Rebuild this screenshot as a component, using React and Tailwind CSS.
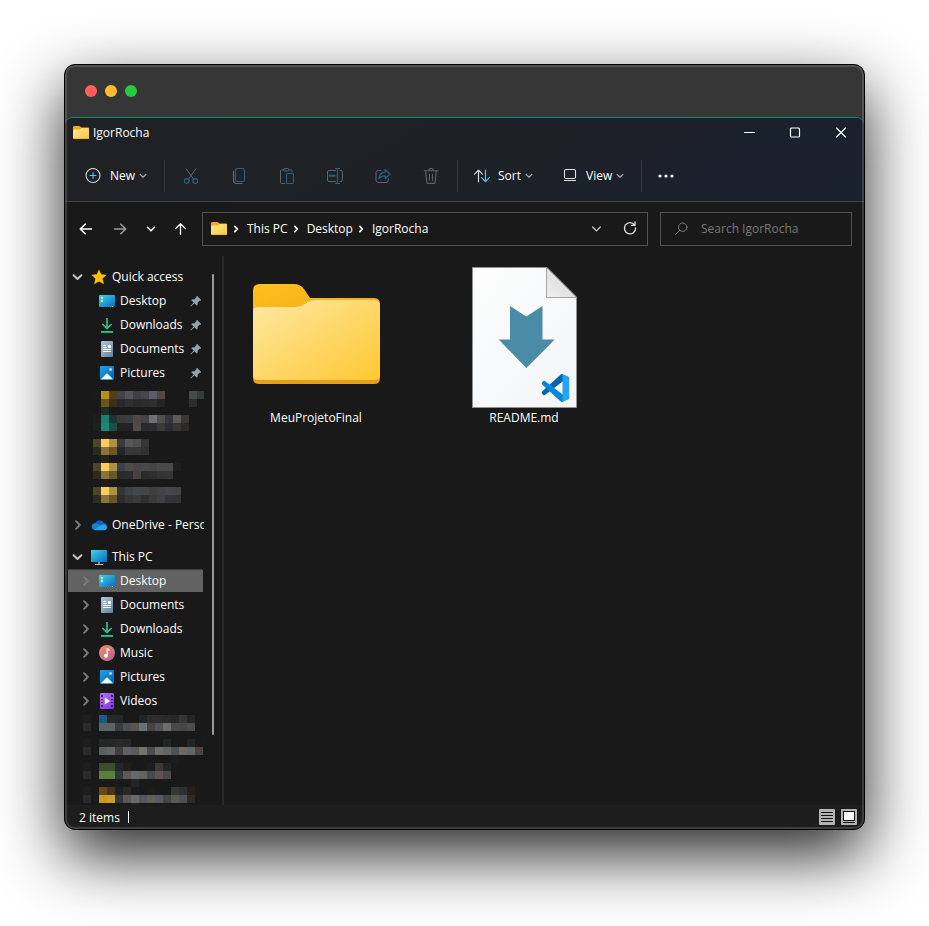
import React from 'react';

function GradientDefs() {
  return (
    <svg className="absolute size-0" aria-hidden="true">
      <defs>
        <linearGradient id="g-folder" x1="0" y1="0" x2="1" y2="1">
          <stop offset="0" stopColor="#ffe8a3" />
          <stop offset="1" stopColor="#ffc832" />
        </linearGradient>
        <linearGradient id="g-tab" x1="0" y1="0" x2="1" y2="1">
          <stop offset="0" stopColor="#fec11b" />
          <stop offset="1" stopColor="#f0a21c" />
        </linearGradient>
        <linearGradient id="g-screen" x1="0" y1="0" x2="1" y2="1">
          <stop offset="0" stopColor="#35dbe6" />
          <stop offset="1" stopColor="#0b68c4" />
        </linearGradient>
        <linearGradient id="g-doc" x1="0" y1="0" x2="1" y2="1">
          <stop offset="0" stopColor="#b5c7da" />
          <stop offset="1" stopColor="#64809f" />
        </linearGradient>
        <linearGradient id="g-pic" x1="0" y1="0" x2="1" y2="1">
          <stop offset="0" stopColor="#1ea2e6" />
          <stop offset="1" stopColor="#0660c0" />
        </linearGradient>
        <linearGradient id="g-music" x1="0" y1="0" x2="1" y2="1">
          <stop offset="0" stopColor="#f2975f" />
          <stop offset="1" stopColor="#b55c98" />
        </linearGradient>
        <linearGradient id="g-video" x1="0" y1="0" x2="1" y2="1">
          <stop offset="0" stopColor="#b878f2" />
          <stop offset="1" stopColor="#7b2fe0" />
        </linearGradient>
        <linearGradient id="g-down" x1="0" y1="0" x2="0" y2="1">
          <stop offset="0" stopColor="#2fce8f" />
          <stop offset="1" stopColor="#17a592" />
        </linearGradient>
        <linearGradient id="g-page" x1="0" y1="0" x2="1" y2="1">
          <stop offset="0" stopColor="#fdfdfd" />
          <stop offset="1" stopColor="#f3f5f8" />
        </linearGradient>
        <linearGradient id="g-fold" x1="0" y1="1" x2="1" y2="0">
          <stop offset="0" stopColor="#f1f1f1" />
          <stop offset="1" stopColor="#cfcfcf" />
        </linearGradient>
      </defs>
    </svg>
  );
}

/* ---------- line icons ---------- */

function Line({ size = 16, children, className = '' }) {
  return (
    <svg
      width={size}
      height={size}
      viewBox={`0 0 ${size} ${size}`}
      fill="none"
      stroke="currentColor"
      strokeLinecap="round"
      strokeLinejoin="round"
      className={`shrink-0 ${className}`}
      aria-hidden="true"
    >
      {children}
    </svg>
  );
}

const ChevronDown = ({ className }) => (
  <Line size={8} className={className}>
    <path d="M1.200 2.500 4 5.200l2.800-2.700" strokeWidth="1.200" />
  </Line>
);

const CrumbChevron = () => (
  <Line size={8}>
    <path d="M2.800 1.400 5.400 4 2.800 6.600" strokeWidth="1.700" />
  </Line>
);

const TreeChevron = ({ open }) => (
  <Line className={open ? 'text-[#c8c8c8]' : 'text-[#7c7c7c]'}>
    {open ? (
      <path d="M3.600 6.200 7.500 10l3.900-3.800" strokeWidth="1.900" />
    ) : (
      <path d="M6 4.200 9.800 8 6 11.800" strokeWidth="1.900" />
    )}
  </Line>
);

const BLUE = '#28607f';

const PlusCircle = () => (
  <Line className="text-[#d6d6d6]">
    <circle cx="8" cy="7.500" r="7" strokeWidth="1.100" />
    <path d="M8 4.500v6M5 7.500h6" stroke="#4cc2ff" strokeWidth="1.100" />
  </Line>
);

const Cut = () => (
  <Line>
    <path d="M3.200.800 10.600 11.200M12.800.800 5.400 11.200" />
    <circle cx="3.800" cy="13" r="2.400" stroke={BLUE} strokeWidth="1.200" />
    <circle cx="12.200" cy="13" r="2.400" stroke={BLUE} strokeWidth="1.200" />
  </Line>
);

const Copy = () => (
  <Line>
    <path d="M2.500 3v9.500a3 3 0 0 0 3 3h5.500" strokeWidth="1.200" />
    <rect x="4.500" y=".5" width="9" height="13" rx="1.800" stroke={BLUE} strokeWidth="1.200" />
  </Line>
);

const Paste = () => (
  <Line>
    <path d="M4.400 1.900H2.500a1 1 0 0 0-1 1v11.600a1 1 0 0 0 1 1h3.100M9.800 1.900H12a1 1 0 0 1 1 1v1.300" />
    <rect x="4.500" y=".6" width="5.300" height="2.400" rx="1.100" />
    <rect x="7.500" y="5.500" width="7" height="10" rx="1.100" stroke={BLUE} strokeWidth="1.200" />
  </Line>
);

const Rename = () => (
  <Line>
    <path d="M8.500 2.500H2a1.500 1.500 0 0 0-1.500 1.500v8a1.500 1.500 0 0 0 1.500 1.500h6.500M13 2.500h.8a1.700 1.700 0 0 1 1.700 1.700v7.600a1.700 1.700 0 0 1-1.700 1.700H13" />
    <path d="M10.500 1v14M8.500.500h4M8.500 15.500h4" stroke={BLUE} strokeWidth="1.200" />
    <path d="M2.800 7.800h5" stroke={BLUE} strokeWidth="2" />
  </Line>
);

const Share = () => (
  <Line>
    <path d="M6 2.500H3.300A2.300 2.300 0 0 0 1 4.800v7.400a2.300 2.300 0 0 0 2.300 2.300h7.600a2.300 2.300 0 0 0 2.300-2.300v-1.500" />
    <path d="M10.200 1.500 15 6l-4.800 4.400V7.900C7.200 7.900 5.400 8.800 4 10.600c.3-3.600 2.600-6.300 6.200-6.600Z" stroke={BLUE} strokeWidth="1.300" />
  </Line>
);

const Trash = () => (
  <Line>
    <path d="M1.200 2.800h13.600M5.800 2.600a2.200 2.200 0 0 1 4.400 0M2.700 3l1.100 11.300A1.200 1.200 0 0 0 5 15.400h6a1.200 1.200 0 0 0 1.200-1.100L13.300 3M6.500 6.400v5.800M9.500 6.400v5.800" strokeWidth="1.100" />
  </Line>
);

const SortIcon = () => (
  <Line>
    <path d="M4.500 13.800V2.300M.600 6.200l3.900-4 3.900 4" stroke="#d6d6d6" strokeWidth="1.200" />
    <path d="M11.500 2.200v11.500M7.600 9.700l3.900 4 3.900-4" stroke="#4cc2ff" strokeWidth="1.200" />
  </Line>
);

const ViewIcon = () => (
  <Line className="text-[#dedede]">
    <rect x="1.500" y="1.500" width="11" height="9" rx="1.500" strokeWidth="1.100" />
    <path d="M1.500 12.500h11" strokeWidth="1.100" />
  </Line>
);

const ArrowLeft = () => (
  <Line>
    <path d="M13.500 8H2.400M7.200 3.200 2.300 8l4.900 4.800" strokeWidth="1.600" />
  </Line>
);
const ArrowRight = () => (
  <Line>
    <path d="M2.500 8h11.100M8.800 3.200 13.700 8l-4.900 4.800" strokeWidth="1.600" />
  </Line>
);
const ArrowUp = () => (
  <Line>
    <path d="M8.500 13.500V2.900M3.700 7.500l4.800-4.800 4.800 4.800" strokeWidth="1.300" />
  </Line>
);
const Down = () => (
  <Line size={10}>
    <path d="M1.500 3.300 5 6.700l3.500-3.400" strokeWidth="1.600" />
  </Line>
);
const Refresh = () => (
  <Line>
    <path d="M12.600 4A5.600 5.600 0 1 0 13.600 7M13 1v3.400H9.600" strokeWidth="1.300" />
  </Line>
);
const Magnifier = () => (
  <Line size={14} className="text-[#7c7c7c]">
    <circle cx="7.700" cy="5.200" r="4.200" />
    <path d="M4.700 8.300.600 12.600" />
  </Line>
);

/* ---------- colour icons ---------- */

function Art({ children, w = 16, h = 16 }) {
  return (
    <svg width={w} height={h} viewBox={`0 0 ${w} ${h}`} className="shrink-0" aria-hidden="true">
      {children}
    </svg>
  );
}

const SmallFolder = () => (
  <Art h={14}>
    <path d="M0 1.500Q0 0 1.300 0H6q.8 0 1.300.6L8.500 1.500H15q1 0 1 1V6H0Z" fill="#f2ab10" />
    <path d="M0 4.600q0-1 1-1h5.400q.6 0 1-.4l.9-.9q.4-.3 1-.3H15q1 0 1 1v8.800q0 1.200-1 1.200H1q-1 0-1-1.200Z" fill="url(#g-folder)" />
    <path d="M.400 12q.3.600.9.600h13.400q.6 0 .9-.6" stroke="#e0a52a" strokeWidth=".7" fill="none" />
  </Art>
);

const Star = () => (
  <Art>
    <path d="m8 .9 2.100 4.700 5.100.5-3.800 3.500 1.100 5.200L8 12.200l-4.500 2.600 1.100-5.200L.8 6.100l5.100-.5Z" fill="#ffc400" stroke="#fbb000" strokeWidth=".5" />
  </Art>
);
const DesktopIcon = () => (
  <Art>
    <rect y="2" width="16" height="12" rx="1" fill="url(#g-screen)" />
    <path d="M2 4h2v2H2ZM2 7h2v2H2Z" fill="#fff" />
    <path d="M11 13h1v1h-1ZM13 13h1v1h-1Z" fill="#e6f6ff" />
  </Art>
);
const DownloadIcon = () => (
  <Art>
    <path d="M8 1v10M3.400 7 8 11.500 12.600 7" fill="none" stroke="#2bc08f" strokeWidth="1.700" />
    <rect x="2" y="14" width="12" height="2" rx=".4" fill="url(#g-down)" />
  </Art>
);
const DocumentIcon = () => (
  <Art>
    <rect x="2" y="0" width="12" height="16" rx="1" fill="url(#g-doc)" />
    <path d="M4 4h3v1H4ZM4 6h4v1H4ZM9 4h3v3H9ZM4 8h8v1H4ZM4 10h8v1H4Z" fill="#fff" />
  </Art>
);
const PictureIcon = () => (
  <Art>
    <rect x="1" y="1" width="14" height="14" rx="1.200" fill="url(#g-pic)" />
    <path d="m2 14.200 5-5.300q1-1 2 0l5 5.300Z" fill="#f4fbff" />
    <circle cx="11.500" cy="4.500" r="1.300" fill="#e4f6ff" />
  </Art>
);
const MusicIcon = () => (
  <Art>
    <circle cx="8" cy="8" r="8" fill="url(#g-music)" />
    <path d="M8.300 3v7.600" stroke="#fff" strokeWidth="1.300" />
    <path d="M8.300 3q2.400.6 2.700 3.200Q10.100 5.300 8.300 5.300Z" fill="#fff" />
    <circle cx="6.900" cy="10.800" r="2" fill="#fff" />
  </Art>
);
const VideoIcon = () => (
  <Art>
    <rect x="1" y="0" width="14" height="16" rx="1.200" fill="url(#g-video)" />
    <path d="M2 2h2v2H2ZM2 6h2v1H2ZM2 9h2v1H2ZM2 12h2v2H2ZM12 2h2v2h-2ZM12 6h2v1h-2ZM12 9h2v1h-2ZM12 12h2v2h-2Z" fill="#4a1a86" />
    <path d="m5.800 4.500 5.400 3.500-5.400 3.500Z" fill="#fff" />
  </Art>
);
const CloudIcon = () => (
  <Art>
    <path d="M4 6.400a5 5 0 0 1 9-.6 3.800 3.800 0 0 1 3 3.700H3Z" fill="#0a63c0" />
    <path d="M3.800 13A3.400 3.400 0 0 1 3.400 6.300 4.600 4.600 0 0 1 7 6.900L15.500 11 13 13Z" fill="#1580d8" />
    <path d="M3.300 12.700 10 8.200a3.800 3.800 0 0 1 5.300.5 2.700 2.700 0 0 1-2 4.500H4.600q-.8 0-1.300-.5Z" fill="#2aa4ee" />
  </Art>
);
const ComputerIcon = () => (
  <Art>
    <rect y="1" width="16" height="12" rx=".8" fill="url(#g-screen)" />
    <path d="M7 13h2v2H7Z" fill="#7e8a92" />
    <path d="M4 15h8v1H4Z" fill="#b4bdc2" />
  </Art>
);
const Pin = () => (
  <Art w={12} h={12}>
    <path d="M7 .8 11.200 5l-.9.9-.7-.2-2 2 .1 2-.9.9L4.400 8.200.9 11.500l-.5-.4 3.300-3.500L1.300 5.200l.9-.9 2.100.1 2-2-.2-.7Z" fill="#97a3ab" />
  </Art>
);

const BigFolder = () => (
  <Art w={127} h={100}>
    <path d="M0 7Q0 0 7 0h34q6 0 10 5l6 9h64q6 0 6 6v30H0Z" fill="url(#g-tab)" />
    <path d="M0 50h127v44q0 6-6 6H6q-6 0-6-6Z" fill="#e6a01e" />
    <path d="M0 28q0-5 5-5h38q5 0 9-3l3-2q3-2 7-2h59q6 0 6 6v70q0 4-6 4H6q-6 0-6-4Z" fill="url(#g-folder)" />
  </Art>
);

const MarkdownFile = () => (
  <Art w={105} h={141}>
    <path d="M.5.500H75L104.500 30v110.500H.5Z" fill="url(#g-page)" stroke="#8f9294" />
    <path d="M74.500.500 104.500 30.500h-30Z" fill="url(#g-fold)" stroke="#a5a5a5" />
    <path d="m38 39 16.300 10.500L70.500 39v33.500h12.200L54.300 101 26.700 72.500H38Z" fill="#4a8ca8" />
    <svg x="69.500" y="107" width="28" height="28" viewBox="0 0 100 100">
      <path d="M96.461 10.796 75.857.876A6.250 6.250 0 0 0 68.750 2.083L1.299 63.583a4.167 4.167 0 0 0 .004 6.162l5.510 5.009a4.167 4.167 0 0 0 5.321.236L93.361 13.370C96.086 11.303 100 13.246 100 16.667v-.240a6.250 6.250 0 0 0-3.539-5.631Z" fill="#0065a9" />
      <path d="m96.461 89.204-20.604 9.920a6.250 6.250 0 0 1-7.107-1.207L1.299 36.417a4.167 4.167 0 0 1 .004-6.162l5.510-5.009a4.167 4.167 0 0 1 5.321-.236l81.227 61.620c2.725 2.067 6.639.124 6.639-3.297v.240a6.250 6.250 0 0 1-3.539 5.631Z" fill="#0288d8" />
      <path d="M75.858 99.126a6.250 6.250 0 0 1-7.108-1.209C71.056 100.223 75 98.590 75 95.328V4.672c0-3.262-3.944-4.895-6.250-2.589A6.250 6.250 0 0 1 75.858.874l20.600 9.907A6.250 6.250 0 0 1 100 16.413v67.174a6.250 6.250 0 0 1-3.541 5.633Z" fill="#24a4f3" />
    </svg>
  </Art>
);

/* ---------- pixelated entries ---------- */

// Each line: [y, first column, colours...]; "-" leaves a cell empty.
const MOSAIC_TOP = [
  [6, 0, '#1c1a18 #b8900f #514014 #434347 #505457 #424041 #46474b #5b5e68 #514844 - - - #47494d #373a3b'],
  [14, 0, '- #6b5415 #3a3015 #26282c #2d2f33 #2a2a2c #2a2c2f #2d2f32 #272323 - - - #2c2d30'],
  [22, 1, '#1b2e2b'],
  [30, 0, '#1a1e1e #1a7f73 #1b3633 #3b3a3a #373f40 #524548 #434246 #6e7174 #524d4a #37353d #5a5b56 #3a3735'],
  [38, 0, '#1b2222 #1b8679 #1b4d49 #222222 #222222 #4f4b49 #2a2a2a #2c2c2c #3a3a3b #2d2d30 #363636 #2b2a29'],
  [46, 1, '#211d16'],
  [54, 0, '#4e4328 #f8cd5d #ac9148 #373b40 #585758 #4e5050 #393532'],
  [62, 0, '#2e2a20 #8a733a #6b5624 #23272b #38383a #363738 #313131'],
  [70, 1, '#2a2216'],
  [78, 0, '#4e4328 #f8cd5d #ac9148 #404148 #4c4b4a #494547 #48494c #454546 #4a4a49 #494a4a #211d1a'],
  [86, 0, '#2e2a20 #8a733a #6b5624 #28292c #2b2b2c #484240 #2b2b2c #2f2f2f #343434 #363636'],
  [94, 1, '#211d16'],
  [102, 0, '#4e4328 #f8cd5d #ac9148 #353536 #404148 #45484a #454547 #403f3d #434242 #43474d #464241'],
  [110, 0, '#2e2a20 #8a733a #6b5624 #2c2c2b #333539 #383b3c #2f302f #3a3a39 #404041 #31343a #333333'],
];

const MOSAIC_BOTTOM = [
  [2, 0, '#1e1e1e - #1b5c86 #272829 #25272a - - #20252a #2f2e2d #2d2d2d #28292a #262728 #343537 #272523'],
  [10, 0, '#2b2b2b - #57656b #626262 #383b40 #4c4f54 #5a544f #677278 #4a4141 #515158 #6d6d6e #484848 #464646 #4c4c4c'],
  [26, 0, '#1d1d1d - #252727 #262727 #2a2a2a #282829 - - - - #232424 - - #232524 - #191d22'],
  [34, 0, '#2b2b2b - #5b605d #646464 #3d3d40 #606167 #5a5a58 #73726d #494c4e #6d6d6b #646462 #4c5257 #6e6762 #636567 #4e443f #1a1d23'],
  [42, 11, '#1a1d20'],
  [50, 0, '#1d1d1d - #3e4b2c #3e4b2c #21282b #231d19 - - #1b1d20 #3b3835 #232624'],
  [58, 0, '#2b2b2b - #5c7d3b #5d7e3c #313739 #605953 #68676e #626462 #464a4b #5f5250 #49494c'],
  [66, 6, '#232425'],
  [74, 0, '#1d1d1d - #664617 #473415 #1c1f24 #2c2925 #1a1b1e - #1c1d1a - - #353838 #2d3230 #231f1d'],
  [82, 0, '#2b2b2b - #cc971b #c6a02a #33373a #5a5859 #6c696a #555461 #5f5f56 #555964 #454346 #585853 #4c4f58 #2e2924'],
  [90, 6, '#242425'],
];

function Mosaic({ lines, height, className }) {
  return (
    <li className={className}>
      <svg width="128" height={height} shapeRendering="crispEdges" className="block" aria-hidden="true">
        {lines.map(([y, first, colours]) =>
          colours.split(' ').map((fill, i) =>
            fill === '-' ? null : (
              <rect key={`${y}-${i}`} x={(first + i) * 8} y={y} width="8" height="8" fill={fill} />
            ),
          ),
        )}
      </svg>
    </li>
  );
}

/* ---------- sidebar ---------- */

function TreeRow({ icon, label, nested, open, expandable = true, pinned, selected }) {
  return (
    <li
      className={`flex h-6 items-center ${nested ? 'pl-[13px]' : 'pl-[5px]'} ${
        selected ? 'bg-[#626262] shadow-[inset_3px_0_0_#191919,inset_-1px_-1px_0_#191919,inset_0_1px_0_#3f3f3f]' : ''
      }`}
    >
      {expandable ? (
        <button type="button" aria-label={`Expand ${label}`} className="size-4">
          <TreeChevron open={open} />
        </button>
      ) : (
        <span className="w-4 shrink-0" />
      )}
      <a href="#" className="ml-[5px] flex min-w-0 flex-1 items-center gap-[5px]">
        {icon}
        <span className="whitespace-nowrap">{label}</span>
        {pinned && (
          <span className="mr-0.5 ml-auto">
            <Pin />
          </span>
        )}
      </a>
    </li>
  );
}

function Sidebar() {
  return (
    <aside className="flex w-[159px] shrink-0 overflow-hidden border-r-2 border-[#292929]">
      <ul className="w-[139px] shrink-0 overflow-hidden pt-[9px]">
        <TreeRow icon={<Star />} label="Quick access" open />
        <TreeRow icon={<DesktopIcon />} label="Desktop" nested expandable={false} pinned />
        <TreeRow icon={<DownloadIcon />} label="Downloads" nested expandable={false} pinned />
        <TreeRow icon={<DocumentIcon />} label="Documents" nested expandable={false} pinned />
        <TreeRow icon={<PictureIcon />} label="Pictures" nested expandable={false} pinned />
        <Mosaic lines={MOSAIC_TOP} height={120} className="mb-2 pl-7" />
        <TreeRow icon={<CloudIcon />} label="OneDrive - Personal" />
        <li className="h-2" />
        <TreeRow icon={<ComputerIcon />} label="This PC" open />
        <TreeRow icon={<DesktopIcon />} label="Desktop" nested selected />
        <TreeRow icon={<DocumentIcon />} label="Documents" nested />
        <TreeRow icon={<DownloadIcon />} label="Downloads" nested />
        <TreeRow icon={<MusicIcon />} label="Music" nested />
        <TreeRow icon={<PictureIcon />} label="Pictures" nested />
        <TreeRow icon={<VideoIcon />} label="Videos" nested />
        <Mosaic lines={MOSAIC_BOTTOM} height={98} className="pl-[18px]" />
      </ul>
      <div className="mt-[18px] mb-[70px] ml-2 w-0.5 rounded bg-[#9a9a9a]" />
    </aside>
  );
}

/* ---------- bars ---------- */

const Divider = () => <span className="mx-0.5 h-8 w-px bg-[#34373c]" />;

function TitleBar() {
  return (
    <div className="flex h-[30px] items-center pl-2">
      <SmallFolder />
      <h1 className="ml-1 flex-1">IgorRocha</h1>
      <button type="button" aria-label="Minimize" className="flex w-[46px] justify-center">
        <Line size={12}>
          <path d="M1.500 5.500h10" />
        </Line>
      </button>
      <button type="button" aria-label="Maximize" className="flex w-[46px] justify-center">
        <Line size={12}>
          <rect x="1.500" y="1" width="9" height="9" rx="1" strokeWidth="1.200" />
        </Line>
      </button>
      <button type="button" aria-label="Close" className="flex w-[46px] justify-center">
        <Line size={12}>
          <path d="m1.500 1 9 9M10.500 1l-9 9" strokeWidth="1.100" />
        </Line>
      </button>
    </div>
  );
}

const FILE_ACTIONS = [
  ['Cut', Cut],
  ['Copy', Copy],
  ['Paste', Paste],
  ['Rename', Rename],
  ['Share', Share],
  ['Delete', Trash],
];

function CommandBar() {
  return (
    <div className="flex h-[53px] items-center pt-0.5 font-medium">
      <button type="button" className="flex w-[97px] items-center pl-5">
        <PlusCircle />
        <span className="ml-[9px]">New</span>
        <ChevronDown className="ml-1 text-[#a8a8a8]" />
      </button>
      <Divider />
      {FILE_ACTIONS.map(([name, Icon]) => (
        <button key={name} type="button" aria-label={name} disabled className="flex w-12 justify-center text-[#626468]">
          <Icon />
        </button>
      ))}
      <Divider />
      <button type="button" className="flex w-[90px] items-center pl-3.5">
        <SortIcon />
        <span className="ml-2">Sort</span>
        <ChevronDown className="ml-1 text-[#a8a8a8]" />
      </button>
      <button type="button" className="flex w-[89px] items-center pl-[13px]">
        <ViewIcon />
        <span className="ml-[7px]">View</span>
        <ChevronDown className="ml-1 text-[#a8a8a8]" />
      </button>
      <Divider />
      <button type="button" aria-label="See more" className="flex w-11 justify-center">
        <svg width="18" height="4" viewBox="0 0 18 4" fill="#fff" aria-hidden="true">
          <circle cx="3" cy="2" r="1.600" />
          <circle cx="9" cy="2" r="1.600" />
          <circle cx="15" cy="2" r="1.600" />
        </svg>
      </button>
    </div>
  );
}

function AddressBar() {
  return (
    <div className="flex h-[54px] items-center pr-3 pl-1">
      <button type="button" aria-label="Back" className="flex w-[34px] justify-center">
        <ArrowLeft />
      </button>
      <button type="button" aria-label="Forward" className="flex w-[34px] justify-center text-[#9a9a9a]">
        <ArrowRight />
      </button>
      <button type="button" aria-label="Recent locations" className="flex w-7 justify-center">
        <Down />
      </button>
      <button type="button" aria-label="Up" className="mr-[7px] flex w-[30px] justify-center">
        <ArrowUp />
      </button>
      <nav className="flex h-[34px] min-w-0 flex-1 items-center border border-[#535353] pl-2">
        <SmallFolder />
        <ol className="ml-1 flex flex-1 items-center">
          {['This PC', 'Desktop', 'IgorRocha'].map((name) => (
            <li key={name} className="flex items-center">
              <span className="mr-[7px] ml-px">
                <CrumbChevron />
              </span>
              <a href="#" className="mr-[3px]">
                {name}
              </a>
            </li>
          ))}
        </ol>
        <button type="button" aria-label="Previous locations" className="flex w-[34px] justify-center text-[#cfcfcf]">
          <Line size={10}>
            <path d="M1.500 3 5.500 6.800 9.300 3" strokeWidth="1.200" />
          </Line>
        </button>
        <button type="button" aria-label="Refresh" className="flex w-[34px] justify-center text-[#dedede]">
          <Refresh />
        </button>
      </nav>
      <label className="ml-3 flex h-[34px] w-48 items-center border border-[#535353] pl-[14px]">
        <Magnifier />
        <input
          type="search"
          aria-label="Search IgorRocha"
          placeholder="Search IgorRocha"
          className="ml-3 w-full min-w-0 bg-transparent outline-none placeholder:text-[#777777]"
        />
      </label>
    </div>
  );
}

function FileTile({ icon, name }) {
  return (
    <li className="w-[184px]">
      <a href="#" className="flex flex-col items-center">
        <span className="flex h-[141px] items-center">{icon}</span>
        <span className="leading-5">{name}</span>
      </a>
    </li>
  );
}

function StatusBar() {
  return (
    <footer className="flex h-6 items-center bg-[#1d1d1d] pr-[7px] pl-3.5">
      <span className="pt-0.5">2 items</span>
      <span className="ml-2 h-3 w-px bg-white" />
      <div className="ml-auto flex gap-1.5">
        <button type="button" aria-label="Details view">
          <Art>
            <rect width="16" height="16" rx="1" fill="#b3b3b3" />
            <path d="M2 3.500h12M2 6.500h12M2 9.500h12M2 12.500h12" stroke="#111" />
          </Art>
        </button>
        <button type="button" aria-label="Large icons view">
          <Art>
            <rect width="16" height="16" rx="1" fill="#b3b3b3" />
            <rect x="2.500" y="2.500" width="11" height="9" fill="#fff" stroke="#111" />
            <path d="M2 13.500h12" stroke="#111" />
          </Art>
        </button>
      </div>
    </footer>
  );
}

export default function App() {
  return (
    <div className="flex h-screen min-h-[500px] bg-white px-16 pt-16 pb-24 font-['Open_Sans','Noto_Sans',sans-serif] text-xs text-white">
      <GradientDefs />
      <div className="relative flex min-w-0 flex-1 flex-col overflow-hidden rounded-[11px] border border-black bg-[#363636] shadow-[0_25px_65px_rgba(0,0,0,0.85)]">
        <div className="flex h-[52px] shrink-0 items-center gap-2 pl-5">
          <button type="button" aria-label="Close window" className="size-3 rounded-full bg-[#ff5f57]" />
          <button type="button" aria-label="Minimize window" className="size-3 rounded-full bg-[#febc2e]" />
          <button type="button" aria-label="Zoom window" className="size-3 rounded-full bg-[#28c840]" />
        </div>
        <div className="flex min-h-0 flex-1 flex-col rounded-t-lg border-t border-[#0c8a74] bg-[#191919]">
          <header className="shrink-0 rounded-t-lg border-b border-[#414346] bg-linear-150 from-[#202124] via-[#1d2127] to-[#19202f]">
            <TitleBar />
            <CommandBar />
          </header>
          <AddressBar />
          <div className="flex min-h-0 flex-1">
            <Sidebar />
            <main className="min-w-0 flex-1 overflow-hidden pt-[11px]">
              <ul className="flex flex-wrap gap-6">
                <FileTile
                  icon={
                    <span className="pb-2">
                      <BigFolder />
                    </span>
                  }
                  name="MeuProjetoFinal"
                />
                <FileTile icon={<MarkdownFile />} name="README.md" />
              </ul>
            </main>
          </div>
          <StatusBar />
        </div>
        <div className="pointer-events-none absolute inset-0 rounded-[10px] border-2 border-white/15" />
      </div>
    </div>
  );
}
